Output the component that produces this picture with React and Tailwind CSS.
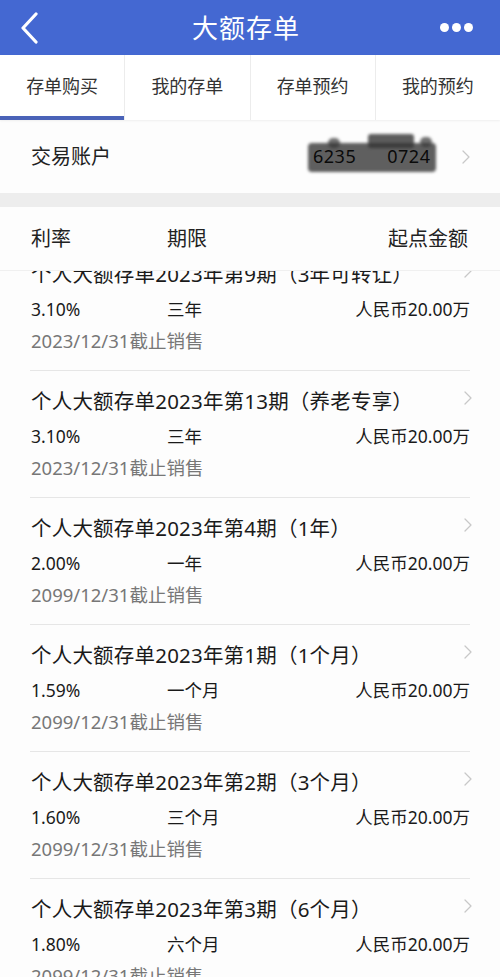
import React from "react";

const items = [
  { title: "个人大额存单2023年第9期（3年可转让）", rate: "3.10%", term: "三年", date: "2023/12/31截止销售" },
  { title: "个人大额存单2023年第13期（养老专享）", rate: "3.10%", term: "三年", date: "2023/12/31截止销售" },
  { title: "个人大额存单2023年第4期（1年）", rate: "2.00%", term: "一年", date: "2099/12/31截止销售" },
  { title: "个人大额存单2023年第1期（1个月）", rate: "1.59%", term: "一个月", date: "2099/12/31截止销售" },
  { title: "个人大额存单2023年第2期（3个月）", rate: "1.60%", term: "三个月", date: "2099/12/31截止销售" },
  { title: "个人大额存单2023年第3期（6个月）", rate: "1.80%", term: "六个月", date: "2099/12/31截止销售" },
];

function Chevron({ className = "" }) {
  return (
    <svg width="8" height="14" viewBox="0 0 8 14" className={className}>
      <path d="M1 1 L7 7 L1 13" fill="none" stroke="#c8c8c8" strokeWidth="1.3" strokeLinecap="round" strokeLinejoin="round" />
    </svg>
  );
}

export default function App() {
  const tabs = ["存单购买", "我的存单", "存单预约", "我的预约"];
  return (
    <div className="w-[500px] h-[977px] overflow-hidden bg-[#fdfdfd] font-['Noto_Sans','Noto_Sans_CJK_SC',sans-serif] flex flex-col">
      {/* Header */}
      <div className="h-[55px] bg-[#4468d2] flex items-center justify-between px-[20px] shrink-0">
        <svg width="20" height="32" viewBox="0 0 20 32">
          <path d="M16 2 L3 16 L16 30" fill="none" stroke="#ffffff" strokeWidth="3.2" strokeLinecap="round" strokeLinejoin="round" />
        </svg>
        <div className="text-white text-[26px] leading-none tracking-[1px] ml-[12px]">大额存单</div>
        <div className="flex gap-[3px] mr-[7px] items-center">
          <span className="w-[9px] h-[9px] rounded-full bg-white" />
          <span className="w-[9px] h-[9px] rounded-full bg-white" />
          <span className="w-[9px] h-[9px] rounded-full bg-white" />
        </div>
      </div>

      {/* Tabs */}
      <div className="h-[65px] flex shrink-0 bg-white shadow-[0_1px_2px_rgba(0,0,0,0.06)]">
        {tabs.map((t, i) => (
          <div
            key={t}
            className={
              "flex-1 flex flex-col " + (i < 3 ? "border-r border-[#ececec]" : "")
            }
          >
            <div className="flex-1 flex items-center justify-center text-[18px] text-[#333] pt-[1px]">{t}</div>
            <div className={"h-[4px] " + (i === 0 ? "bg-[#4a63b8]" : "bg-transparent")} />
          </div>
        ))}
      </div>

      {/* Account row */}
      <div className="h-[73px] flex items-center justify-between pl-[31px] pr-[30px] shrink-0">
        <div className="text-[20px] text-[#222]">交易账户</div>
        <div className="flex items-center gap-[26px]">
          <div className="relative w-[128px] h-[30px] flex items-center">
            <div className="absolute left-0 right-0 top-[1px] bottom-[0px] bg-[#2a2a2a]/75 rounded-[4px] blur-[1.5px]" />
            <div className="absolute left-[60px] w-[46px] top-[-8px] h-[14px] bg-[#333]/80 rounded-[3px] blur-[1.5px]" />
            <div className="absolute left-[20px] w-[12px] top-[-4px] h-[10px] bg-[#333]/70 rounded-full blur-[1.5px]" />
            <div className="absolute left-[112px] w-[12px] top-[-5px] h-[10px] bg-[#333]/70 rounded-full blur-[1.5px]" />
            <span className="relative text-[18px] text-[#0a0a0a] pl-[5px] tracking-[0.5px]">6235&nbsp;&nbsp;&nbsp;&nbsp;&nbsp;&nbsp;0724</span>
          </div>
          <Chevron />
        </div>
      </div>

      {/* Gray band */}
      <div className="h-[14px] bg-[#ededed] shrink-0" />

      {/* Column header */}
      <div className="h-[63px] flex items-center pl-[31px] pr-[32px] text-[20px] text-[#222] shrink-0">
        <div className="w-[136px]">利率</div>
        <div className="flex-1">期限</div>
        <div>起点金额</div>
      </div>

      {/* List */}
      <div className="flex-1 overflow-hidden border-t border-[#f0f0f0]">
        <div className="mt-[-27px]">
          {items.map((it, i) => (
            <div key={i} className="mx-[30px] border-b border-[#e6e6e6] pt-[18px] pb-[18px] pl-[1px] pr-[0px]">
              <div className="h-[24px] flex items-center justify-between">
                <div className="text-[20.5px] text-[#1a1a1a] leading-[24px] whitespace-nowrap tracking-[0.2px]">{it.title}</div>
                <Chevron className="mr-[-2px] mt-[-6px]" />
              </div>
              <div className="mt-[12px] h-[22px] flex items-center text-[17.5px] text-[#1a1a1a]">
                <div className="w-[136px]">{it.rate}</div>
                <div className="flex-1">{it.term}</div>
                <div>人民币20.00万</div>
              </div>
              <div className="mt-[10px] h-[22px] flex items-center text-[18.5px] text-[#777]">{it.date}</div>
            </div>
          ))}
        </div>
      </div>
    </div>
  );
}
